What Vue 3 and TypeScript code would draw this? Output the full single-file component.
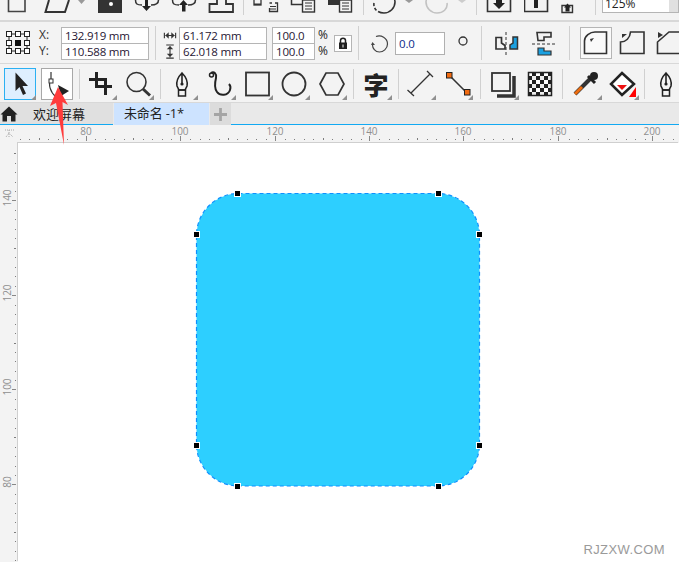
<script setup lang="ts">
const topTicks: number[] = []
for (let k = -7; k < 64; k++) {
  if (k % 10 !== 0 && ((k % 5) + 5) % 5 !== 0) topTicks.push(Math.round(86 + k * 9.467))
}
const topMids: number[] = []
for (let k = -5; k < 64; k += 10) topMids.push(Math.round(86 + k * 9.467))
const topMajors = [
  { x: 86, t: '80' }, { x: 180, t: '100' }, { x: 275, t: '120' }, { x: 369, t: '140' },
  { x: 463, t: '160' }, { x: 558, t: '180' }, { x: 652, t: '200' },
]
const leftTicks: number[] = []
for (let k = -5; k < 39; k++) {
  if (k % 5 !== 0) leftTicks.push(Math.round(200.5 + k * 9.467))
}
const leftMids: number[] = []
for (let k = -5; k < 39; k += 10) leftMids.push(Math.round(200.5 + k * 9.467))
const leftMajors = [
  { y: 200, t: '140' }, { y: 295, t: '120' }, { y: 389, t: '100' }, { y: 484, t: '80' },
]
const handles = [
  [237, 193], [438, 193], [196, 234], [479, 234], [196, 445], [479, 445], [237, 486], [438, 486],
]
</script>

<template>
  <div class="app">
    <!-- clipped standard bar -->
    <div class="bar-std">
      <svg class="s" style="width:30px;margin-left:3px" viewBox="3 0 30 20"><path d="M8.500 0V11.500H25V0" fill="none" stroke="#444" stroke-width="1.600"/></svg>
      <svg class="s" style="width:50px;margin-left:9px" viewBox="42 0 50 20"><path d="M49 0L45.500 12H65L69 0" fill="none" stroke="#333" stroke-width="2"/><path d="M78 0H85L81.500 4Z" fill="#999"/></svg>
      <svg class="s" style="width:30px;margin-left:3px" viewBox="95 0 30 20"><rect x="98" y="0" width="24" height="13" fill="#333"/><circle cx="111" cy="4" r="2" fill="#fff"/></svg>
      <svg class="s" style="width:37px;margin-left:5px" viewBox="130 0 37 20"><path d="M135.500 0C135.500 4 137 5 142 5M158.500 0C158.500 4 156 5 151 5" fill="none" stroke="#333" stroke-width="1.500"/><path d="M145 0H148V6H151L146.500 11L142 6H145Z" fill="#222"/></svg>
      <svg class="s" style="width:37px" viewBox="167 0 37 20"><path d="M172.500 0C172.500 4 174 5 179 5M195.500 0C195.500 4 193 5 188 5" fill="none" stroke="#333" stroke-width="1.500"/><path d="M183.500 0L188 5H185.500V11.500H182V5H179Z" fill="#222"/></svg>
      <svg class="s" style="width:38px" viewBox="204 0 38 20"><path d="M217 0V4H209.500V12H233V4H226V0" fill="none" stroke="#333" stroke-width="1.800"/></svg>
      <i class="vsep tall" style="margin-left:1px"></i>
      <svg class="s" style="width:36px;margin-left:5px" viewBox="249 0 36 20"><rect x="254" y="-3" width="7" height="8" fill="#f3f3f3" stroke="#333" stroke-width="1.300"/><rect x="254" y="3.500" width="7" height="1.500" fill="#333"/><path d="M269.500 3H272M275 3H277.500V11.500H269.500V8" fill="none" stroke="#333" stroke-width="1.300"/><path d="M270 6.500H276M270 9H276" stroke="#333"/></svg>
      <svg class="s" style="width:38px" viewBox="285 0 38 20"><path d="M291.500 0V4.500H302" fill="none" stroke="#333" stroke-width="1.500"/><rect x="302.500" y="0" width="12" height="12" fill="#f3f3f3" stroke="#333" stroke-width="1.400"/><path d="M305 3H312M305 6H312M305 9H312" stroke="#333"/></svg>
      <svg class="s" style="width:39px" viewBox="323 0 39 20"><rect x="328" y="0" width="11" height="5" fill="#333"/><rect x="339.500" y="0" width="12" height="12" fill="#f3f3f3" stroke="#333" stroke-width="1.400"/><path d="M342 3H349M342 6H349M342 9H349" stroke="#333"/></svg>
      <i class="vsep tall" style="margin-left:1px"></i>
      <svg class="s" style="width:52px" viewBox="364 0 52 20"><path d="M374 3C373 9 378 13 384 13C390 13 395 8 395 2C395 1 395 0 394 0" fill="none" stroke="#333" stroke-width="1.600" stroke-dasharray="3 2 3 2 30 0"/><path d="M405 0H413L409 3Z" fill="#999"/></svg>
      <svg class="s" style="width:50px" viewBox="416 0 50 20"><path d="M447 3C448 9 443 13 437 13C431 13 426 8 426 2C426 1 426 0 427 0" fill="none" stroke="#c2c2c2" stroke-width="1.600"/><path d="M458 0H466L462 3Z" fill="#ccc"/></svg>
      <i class="vsep tall vsep-b"></i>
      <svg class="s" style="width:40px;margin-left:4px" viewBox="484 0 40 20"><path d="M487.500 0V11.500H510.500V0" fill="none" stroke="#333" stroke-width="1.600"/><path d="M496 0H502V3H505L499 9L493 3H496Z" fill="#222"/></svg>
      <svg class="s" style="width:35px" viewBox="524 0 35 20"><path d="M524.500 0V11.500H547.500V0" fill="none" stroke="#333" stroke-width="1.600"/><rect x="534" y="0" width="4" height="8" fill="#222"/></svg>
      <svg class="s" style="width:20px" viewBox="559 0 20 20"><path d="M562 5.500H572.500V12.500H562Z" fill="none" stroke="#333" stroke-width="1.400"/><path d="M567.500 3.500L571 7.500H569.500V11.500H565.500V7.500H564Z" fill="#222"/></svg>
      <i class="vsep tall sep-zoom"></i>
      <div class="zoom-combo"><span>125%</span><b></b></div>
    </div>

    <!-- property bar -->
    <div class="bar-prop">
      <svg class="anchor" viewBox="6 30 24 24">
        <path d="M9 33H27V50H9Z" fill="none" stroke="#222" stroke-width="1"/>
        <g fill="#fff" stroke="#222" stroke-width="1">
          <rect x="6.500" y="30.500" width="5" height="5"/><rect x="15.500" y="30.500" width="5" height="5"/><rect x="24.500" y="30.500" width="5" height="5"/>
          <rect x="6.500" y="39.500" width="5" height="5"/><rect x="24.500" y="39.500" width="5" height="5"/>
          <rect x="6.500" y="47.500" width="5" height="5"/><rect x="15.500" y="47.500" width="5" height="5"/><rect x="24.500" y="47.500" width="5" height="5"/>
        </g>
        <rect x="15" y="39" width="6" height="6" fill="#111"/>
      </svg>
      <div class="xy-labels"><span>X:</span><span>Y:</span></div>
      <div class="stack w88"><div class="fld">132.919 mm</div><div class="fld">110.588 mm</div></div>
      <i class="vsep prop-sep-1"></i>
      <div class="wh-icons">
        <svg viewBox="0 0 14 16"><path d="M1 5V11M13 5V11M2 8H12M3 8L5 6V10ZM11 8L9 6V10Z" stroke="#333" fill="#333" stroke-width="1.200"/></svg>
        <svg viewBox="0 0 14 16"><path d="M3 1H11M3 15H11M7 2V14M7 3L5 5H9ZM7 13L5 11H9Z" stroke="#333" fill="#333" stroke-width="1.200"/></svg>
      </div>
      <div class="stack w88 ml2"><div class="fld">61.172 mm</div><div class="fld">62.018 mm</div></div>
      <div class="stack w43 ml5"><div class="fld">100.0</div><div class="fld">100.0</div></div>
      <div class="pct"><span>%</span><span>%</span></div>
      <div class="lock">
        <svg viewBox="0 0 12 14" width="12" height="14"><path d="M3.500 7V4.500C3.500 1.500 8.500 1.500 8.500 4.500V7" fill="none" stroke="#222" stroke-width="1.500"/><rect x="2" y="6.500" width="8" height="6.500" fill="#222"/><rect x="5.500" y="8.500" width="1" height="3" fill="#fff"/></svg>
      </div>
      <i class="vsep prop-sep-2"></i>
      <svg class="rot" viewBox="370 31 20 20"><path d="M376 34.500C381 32.500 387.500 36 387.500 42C387.500 47 383 50 379.500 50C375 50 372.500 46 372.500 43" fill="none" stroke="#444" stroke-width="1.200"/><path d="M371 43H375L372.500 40Z" fill="#444"/></svg>
      <div class="fld angle">0.0</div>
      <svg class="deg" viewBox="0 0 12 12"><circle cx="6" cy="6" r="4" fill="none" stroke="#333" stroke-width="1.300"/></svg>
      <i class="vsep prop-sep-3"></i>
      <svg class="mirror-a" viewBox="494 28 28 26">
        <path d="M496 35.500H501.500V41L505 43.500V47H496Z" fill="#f3f3f3" stroke="#333" stroke-width="1.700"/>
        <path d="M506 30V53" stroke="#333" stroke-width="1" stroke-dasharray="3 2"/>
        <path d="M517 35H517.500V47H510V43L513 41V35Z" fill="#1aa0e0" stroke="#333" stroke-width="1.500"/>
      </svg>
      <svg class="mirror-b" viewBox="530 28 28 26">
        <path d="M537 30.500H551V35H544V38.500H538Z" fill="#f3f3f3" stroke="#333" stroke-width="1.600"/>
        <path d="M532 42H556" stroke="#333" stroke-dasharray="3 2"/>
        <path d="M538 46H544V49H551V53H538Z" fill="#1aa0e0" stroke="#333" stroke-width="1.200"/>
      </svg>
      <i class="vsep prop-sep-4"></i>
      <div class="corner on">
        <svg viewBox="580 26 32 32"><path d="M584.500 52.500V40C584.500 35 590 31 595 31H606.500V52.500Z" fill="none" stroke="#333" stroke-width="1.600"/><path d="M590 38L594 37L591 41Z" fill="#333"/></svg>
      </div>
      <svg class="corner-b" viewBox="618 26 28 32"><path d="M620.500 52.500V41C626 41 630 37 630.500 31H644V52.500Z" fill="none" stroke="#333" stroke-width="1.600"/><path d="M622 33H627L622 37Z" fill="#333"/></svg>
      <svg class="corner-c" viewBox="655 26 24 32"><path d="M657.500 52.500V41L669 31H682V52.500Z" fill="none" stroke="#333" stroke-width="1.600"/><path d="M658 31V37L663 34Z" fill="#333"/></svg>
    </div>

    <!-- toolbox -->
    <div class="bar-tools">
      <div class="cell selected more">
        <svg viewBox="4 68 32 32"><path d="M15.500 72.500V91L19.500 87L23 95L26 93.500L22.500 86H28Z" fill="#222"/></svg>
      </div>
      <div class="cell pressed">
        <svg viewBox="41 68 32 32"><path d="M51 72V80C48 84 50 92 56 97" fill="none" stroke="#333" stroke-width="1.200"/><rect x="49" y="79" width="4" height="4" fill="#fff" stroke="#333"/><path d="M58 85L69 91L61 96Z" fill="#222"/></svg>
      </div>
      <i class="vsep tool-sep ml1"></i>
      <div class="cell more">
        <svg viewBox="86 68 32 32"><path d="M97.500 72V86.500H113M90 79.500H106.500V95" fill="none" stroke="#222" stroke-width="3"/></svg>
      </div>
      <div class="cell more">
        <svg viewBox="123 68 32 32"><circle cx="137.500" cy="82" r="9.500" fill="none" stroke="#333" stroke-width="1.600"/><path d="M144 89L151 95.500" stroke="#333" stroke-width="3"/></svg>
      </div>
      <i class="vsep tool-sep ml1"></i>
      <div class="cell more">
        <svg viewBox="167 68 32 32"><path d="M183 73C180 76 177 81 178 86L180 90H186L188 86C189 81 186 76 183 73ZM183 74V83" fill="none" stroke="#222" stroke-width="1.600"/><circle cx="183" cy="84" r="1.600" fill="#222"/><rect x="179.500" y="90" width="7" height="6" fill="none" stroke="#222" stroke-width="1.500"/></svg>
      </div>
      <div class="cell more ml1">
        <svg viewBox="205 68 32 32"><path d="M212 73C215 71 218 74 217 78C216 82 215 88 218 92C221 96 229 96 231 90C232 87 231 85 230 84" fill="none" stroke="#222" stroke-width="2"/><circle cx="212.500" cy="75" r="2" fill="none" stroke="#222" stroke-width="1.500"/></svg>
      </div>
      <div class="cell more">
        <svg viewBox="242 68 32 32"><rect x="247" y="72.500" width="23" height="23" fill="none" stroke="#333" stroke-width="1.800"/></svg>
      </div>
      <div class="cell more">
        <svg viewBox="279 68 32 32"><circle cx="295" cy="84" r="11.500" fill="none" stroke="#333" stroke-width="1.800"/></svg>
      </div>
      <div class="cell more">
        <svg viewBox="316 68 32 32"><path d="M321 84L327 73H339L345 84L339 95H327Z" fill="none" stroke="#333" stroke-width="1.700"/></svg>
      </div>
      <i class="vsep tool-sep ml1"></i>
      <div class="cell more glyph ml1">字</div>
      <i class="vsep tool-sep ml1"></i>
      <div class="cell more">
        <svg viewBox="405 68 32 32"><path d="M412 93L431 74M408.500 90L415 96M428 71L434 77" stroke="#333" stroke-width="1.300" fill="none"/></svg>
      </div>
      <div class="cell more">
        <svg viewBox="442 68 32 32"><path d="M451 76L467 92" stroke="#333" stroke-width="1.600"/><rect x="447.500" y="72.500" width="5.500" height="5.500" fill="#f16a10" stroke="#222"/><rect x="465.500" y="89.500" width="5.500" height="5.500" fill="#f16a10" stroke="#222"/></svg>
      </div>
      <i class="vsep tool-sep ml2 mr1"></i>
      <div class="cell more">
        <svg viewBox="488 68 32 32"><rect x="493" y="73" width="18" height="18" fill="none" stroke="#333" stroke-width="1.800"/><path d="M515 76V96H498" fill="none" stroke="#333" stroke-width="3.500"/></svg>
      </div>
      <div class="cell">
        <svg viewBox="525 68 32 32">
          <defs><pattern id="chk" x="529" y="72" width="8" height="8" patternUnits="userSpaceOnUse"><rect width="8" height="8" fill="#222"/><rect width="4" height="4" fill="#fff"/><rect x="4" y="4" width="4" height="4" fill="#eee"/></pattern></defs>
          <rect x="529.500" y="72.500" width="23" height="23" fill="url(#chk)" stroke="#222" stroke-width="1.500"/>
        </svg>
      </div>
      <i class="vsep tool-sep ml1 mr2"></i>
      <div class="cell more">
        <svg viewBox="571 68 32 32"><path d="M576 94L591 79" stroke="#333" stroke-width="4"/><path d="M576 94L583 87" stroke="#ed6d10" stroke-width="3"/><path d="M589 76L596 83" stroke="#222" stroke-width="3"/><circle cx="595" cy="76" r="4" fill="#222"/></svg>
      </div>
      <div class="cell more">
        <svg viewBox="608 68 32 32"><path d="M623 73L635 84L623 95L612 84Z" fill="#fff" stroke="#222" stroke-width="2.500"/><path d="M618 85H628L623 90Z" fill="#e11"/><path d="M637 87V97H630Z" fill="#f00"/></svg>
      </div>
      <i class="vsep tool-sep mr1"></i>
      <div class="cell">
        <svg viewBox="652 68 32 32"><path d="M667 73C664 76 661 81 662 86L664 90H670L672 86C673 81 670 76 667 73ZM667 74V83" fill="none" stroke="#222" stroke-width="1.600"/><circle cx="667" cy="84" r="1.600" fill="#222"/><rect x="663.500" y="90" width="7" height="6" fill="none" stroke="#222" stroke-width="1.500"/></svg>
      </div>
    </div>

    <!-- tabs -->
    <div class="tabs">
      <div class="tab home">
        <svg viewBox="0 0 18 16" width="18" height="16"><path d="M9 0.500L17.500 8.500H15.500V15.500H11V10H7V15.500H2.500V8.500H0.500Z" fill="#222"/></svg>
        <span>欢迎屏幕</span>
      </div>
      <div class="tab active">未命名 -1*</div>
      <div class="tab plus">
        <svg viewBox="0 0 14 14" width="13" height="13"><path d="M7 0V14M0 7H14" stroke="#a5a5a5" stroke-width="3"/></svg>
      </div>
      <div class="tab-fill"></div>
    </div>

    <!-- rulers + canvas -->
    <div class="work">
      <div class="ruler-top">
        <svg class="rt" viewBox="0 125 679 18">
          <g fill="#7d7d7d">
            <rect v-for="x in topTicks" :key="x" :x="x" y="139" width="1" height="1"/>
            <rect v-for="x in topMids" :key="'m' + x" :x="x" y="138" width="1" height="2"/>
          </g>
          <g fill="#888">
            <rect v-for="m in topMajors" :key="m.x" :x="m.x" y="136" width="1" height="5"/>
          </g>
          <text v-for="m in topMajors" :key="'t' + m.x" :x="m.x" y="135" class="rnum" text-anchor="middle">{{ m.t }}</text>
          <path d="M5 130H14M9 130V138M6 137L9 133L13 137" stroke="#aaa" fill="none" stroke-dasharray="1 1"/>
        </svg>
      </div>
      <div class="lower">
        <div class="ruler-left">
          <svg class="rl" viewBox="0 143 18 419">
            <g fill="#7d7d7d">
              <rect v-for="y in leftTicks" :key="y" x="15" :y="y" width="1" height="1"/>
              <rect v-for="y in leftMids" :key="'m' + y" x="14" :y="y" width="2" height="1"/>
            </g>
            <g fill="#888">
              <rect v-for="m in leftMajors" :key="m.y" x="12" :y="m.y" width="4" height="1"/>
            </g>
            <text v-for="m in leftMajors" :key="'l' + m.y" class="rnum" text-anchor="middle" :transform="`translate(11 ${m.y - 2}) rotate(-90)`">{{ m.t }}</text>
          </svg>
        </div>
        <div class="canvas">
          <svg class="art" viewBox="18 143 661 419">
            <rect x="196.500" y="193.500" width="283" height="292.500" rx="42" ry="42" fill="#2dcfff"/>
            <rect x="196.500" y="193.500" width="283" height="292.500" rx="42" ry="42" fill="none" stroke="#0e90ff" stroke-width="1.200" stroke-dasharray="4 3"/>
            <rect v-for="h in handles" :key="h[0] + '-' + h[1]" :x="h[0] - 2.500" :y="h[1] - 2.500" width="6" height="6" fill="#000" stroke="#fff" stroke-width="1"/>
          </svg>
          <div class="mark">RJZXW.COM</div>
        </div>
      </div>
    </div>

    <svg class="arrow" viewBox="0 0 679 562"><path d="M58 87L68 105L62.500 102L64 145L56 103L50 106Z" fill="#ff3b3b"/></svg>
  </div>
</template>

<style>
html, body { margin: 0; background: #fff; overflow: hidden; }
</style>

<style scoped>
.app {
  position: relative;
  width: 679px;
  height: 562px;
  overflow: hidden;
  display: flex;
  flex-direction: column;
  font-family: "Open Sans", "Noto Sans CJK SC", sans-serif;
  background: #fff;
  color: #222;
}
svg { display: block; flex: none; }
i { display: block; flex: none; }
.vsep { width: 1px; background: #d0d0d0; }

.bar-std {
  height: 20px;
  flex: none;
  display: flex;
  background: #f3f3f3;
  overflow: hidden;
}
.s { height: 20px; }
.tall { height: 15px; }
.sep-zoom { margin-left: 16px; }
.vsep-b { margin-left: 10px; margin-right: 3px; }
.zoom-combo {
  margin-left: 6px;
  width: 77px;
  height: 13px;
  display: flex;
  background: #fff;
  border: 1px solid #b5b5b5;
  border-top: 0;
  box-sizing: border-box;
  font-size: 12px;
  line-height: 8px;
}
.zoom-combo span { flex: 1; padding-left: 2px; overflow: hidden; }
.zoom-combo b { width: 9px; background: #e0e0e0; }

.bar-prop {
  height: 44px;
  flex: none;
  box-sizing: border-box;
  border-top: 2px solid #d8d8d8;
  border-bottom: 1px solid #d8d8d8;
  padding-top: 1px;
  display: flex;
  align-items: center;
  background: #f3f3f3;
  font-size: 11.500px;
}
.anchor { width: 24px; height: 24px; margin-left: 6px; }
.xy-labels { display: flex; flex-direction: column; margin-left: 9px; width: 22px; line-height: 16px; font-size: 12px; color: #333; }
.stack { display: flex; flex-direction: column; }
.w88 { width: 88px; }
.w43 { width: 43px; }
.ml2 { margin-left: 2px; }
.ml5 { margin-left: 5px; }
.fld {
  box-sizing: border-box;
  height: 17px;
  background: #fff;
  border: 1px solid #b5b5b5;
  padding-left: 3px;
  line-height: 15px;
  font-size: 11.500px;
  letter-spacing: -0.2px;
  color: #1f1633;
  white-space: nowrap;
}
.fld + .fld { margin-top: -1px; }
.prop-sep-1 { height: 34px; margin-left: 6px; }
.wh-icons { display: flex; flex-direction: column; margin-left: 7px; width: 14px; gap: 1px; }
.wh-icons svg { width: 14px; height: 15px; }
.pct { display: flex; flex-direction: column; margin-left: 3px; width: 12px; line-height: 16px; font-size: 12px; }
.lock {
  margin-left: 4px;
  width: 18px;
  height: 17px;
  box-sizing: border-box;
  border: 1px solid #b5b5b5;
  display: flex;
  align-items: center;
  justify-content: center;
  background: #fff;
}
.prop-sep-2 { height: 34px; margin-left: 6px; }
.rot { width: 20px; height: 20px; margin-left: 11px; }
.angle {
  width: 50px;
  height: 23px;
  margin-left: 5px;
  line-height: 21px;
  color: #0a2a8a;
  border-color: #b0b0b0;
}
.deg { width: 12px; height: 12px; margin-left: 12px; margin-bottom: 5px; }
.prop-sep-3 { height: 34px; margin-left: 12px; }
.mirror-a { width: 28px; height: 26px; margin-left: 12px; }
.mirror-b { width: 28px; height: 26px; margin-left: 8px; }
.prop-sep-4 { height: 34px; margin-left: 11px; }
.corner { margin-left: 10px; width: 32px; height: 32px; box-sizing: border-box; }
.corner svg { width: 32px; height: 32px; margin: -1px; }
.corner.on { border: 1px solid #b5b5b5; background: #fafafa; }
.corner-b { width: 28px; height: 32px; margin-left: 6px; }
.corner-c { width: 24px; height: 32px; margin-left: 9px; }

.bar-tools {
  height: 39px;
  flex: none;
  box-sizing: border-box;
  border-bottom: 1px solid #d8d8d8;
  display: flex;
  align-items: center;
  gap: 5px;
  padding: 2px 0 0 4px;
  background: #f3f3f3;
}
.ml1 { margin-left: 1px; }
.mr1 { margin-right: 1px; }
.mr2 { margin-right: 2px; }
.tool-sep.ml2 { margin-left: 2px; }
.cell {
  position: relative;
  width: 32px;
  height: 32px;
  flex: none;
  box-sizing: border-box;
}
.cell svg { width: 32px; height: 32px; }
.cell.more::after {
  content: "";
  position: absolute;
  right: 0;
  bottom: 0;
  border-left: 5px solid transparent;
  border-bottom: 5px solid #909090;
}
.cell.selected { background: #deefff; outline: 1.500px solid #2bb0f2; outline-offset: -1.500px; }
.cell.pressed { background: #fff; outline: 1px solid #a8a8a8; outline-offset: -1px; }
.glyph {
  font-family: "Noto Sans CJK SC", sans-serif;
  font-size: 25px;
  font-weight: 900;
  line-height: 32px;
  text-align: center;
  color: #222;
}
.tool-sep { height: 30px; }

.tabs {
  height: 22px;
  flex: none;
  display: flex;
  background: #e9e9e9;
  font-size: 13px;
}
.tab { box-sizing: border-box; flex: none; height: 22px; }
.home {
  width: 113px;
  background: #e0e0e0;
  display: flex;
  align-items: center;
  border-bottom: 1px solid #12a9f2;
}
.home span { margin-left: 15px; color: #222; }
.active {
  margin-left: 1px;
  width: 95px;
  background: #cde3ff;
  line-height: 21px;
  padding-left: 10px;
  letter-spacing: -0.15px;
}
.plus {
  margin-left: 1px;
  width: 21px;
  background: #dcdcdc;
  display: flex;
  align-items: center;
  justify-content: center;
}
.tab-fill { flex: 1; height: 22px; box-sizing: border-box; border-bottom: 1px solid #12a9f2; }

.work { flex: 1; display: flex; flex-direction: column; min-height: 0; }
.ruler-top { height: 18px; flex: none; background: #f3f3f3; box-sizing: border-box; }
.rt { width: 679px; height: 18px; overflow: visible; }
.lower { flex: 1; display: flex; min-height: 0; }
.ruler-left { width: 18px; flex: none; background: #f3f3f3; }
.rl { width: 18px; height: 419px; overflow: visible; }
.rnum { font-family: "Open Sans", sans-serif; font-size: 10px; fill: #8f8f8f; }
.canvas {
  position: relative;
  flex: 1;
  background: #fff;
  box-shadow: -1px -1px 0 #cfcfcf;
}
.art { width: 661px; height: 419px; }
.mark {
  position: absolute;
  right: 14px;
  bottom: 5px;
  font-family: "Liberation Sans", sans-serif;
  font-size: 13px;
  letter-spacing: 0.4px;
  color: #9a9a9a;
}
.arrow { position: absolute; left: 0; top: 0; width: 679px; height: 562px; pointer-events: none; }
</style>
